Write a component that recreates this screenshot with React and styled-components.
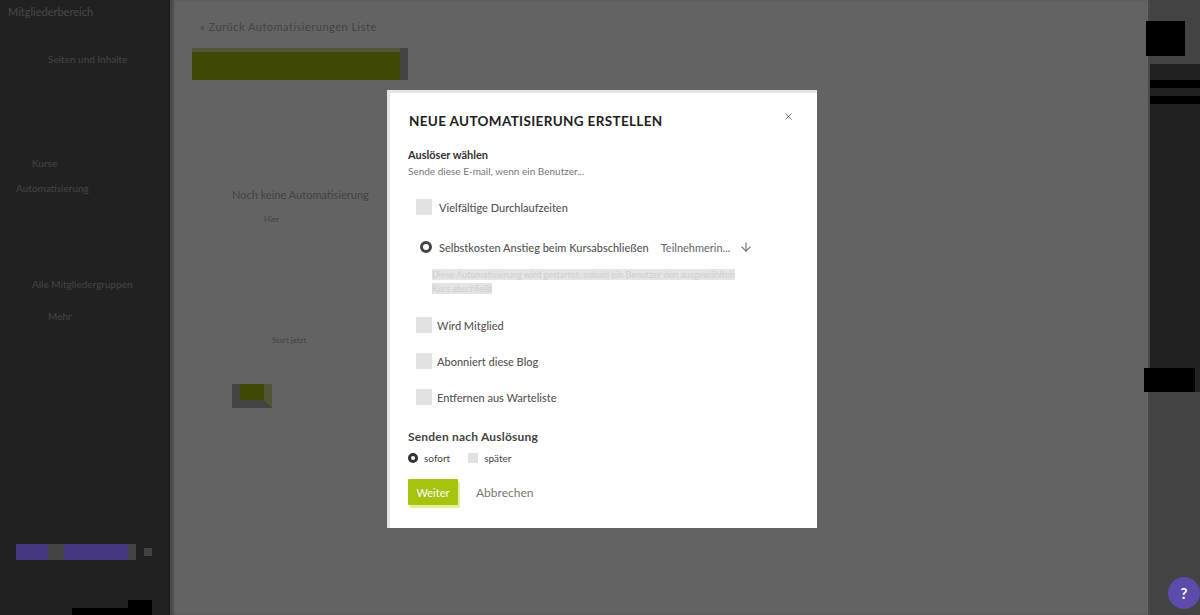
import React from "react";
import styled, { createGlobalStyle } from "styled-components";
import { ArrowDown, X } from "lucide-react";

const triggers = [
  { label: "Vielfältige Durchlaufzeiten", gap: 24 },
  {
    label: "Selbstkosten Anstieg beim Kursabschließen",
    extra: "Teilnehmerin...",
    checked: true,
    hint: "Diese Automatisierung wird gestartet, sobald ein Benutzer den ausgewählten Kurs abschließt",
  },
  { label: "Wird Mitglied", tight: true },
  { label: "Abonniert diese Blog", tight: true },
  { label: "Entfernen aus Warteliste", tight: true },
];

const App = () => {
  return (
    <Page>
      <GlobalStyle />
      <Sidebar>
        <Brand>Mitgliederbereich</Brand>
        <NavItem $indent={48} $top={35}>Seiten und Inhalte</NavItem>
        <NavItem $indent={32} $top={92}>Kurse</NavItem>
        <NavItem $indent={16} $top={13}>Automatisierung</NavItem>
        <NavItem $indent={32} $top={84}>Alle Mitgliedergruppen</NavItem>
        <NavItem $indent={48} $top={20}>Mehr</NavItem>
        <SidebarFoot>
          <UpgradeBar />
          <UpgradeDot />
        </SidebarFoot>
        <BottomStrip />
      </Sidebar>

      <Main>
        <Crumb>« Zurück Automatisierungen Liste</Crumb>
        <TopButton />
        <MainBody>
          <SectionTitle>Noch keine Automatisierung</SectionTitle>
          <SectionText>Hier</SectionText>
          <SectionNote>Start jetzt</SectionNote>
          <SmallButton />
        </MainBody>
      </Main>

      <RightPanel>
        <PanelTop>
          <PanelBlock $width={39} $height={35} $left={-4} />
        </PanelTop>
        <PanelMiddle>
          <PanelBar />
          <PanelBar />
          <PanelBlock $width={51} $height={24} $left={-6} $top={256} />
        </PanelMiddle>
        <PanelBottom>
          <HelpBadge>?</HelpBadge>
        </PanelBottom>
      </RightPanel>

      <Overlay>
        <Modal>
          <ModalHead>
            <ModalTitle>Neue Automatisierung erstellen</ModalTitle>
            <CloseButton aria-label="Schließen">
              <X size={11} strokeWidth={1.6} />
            </CloseButton>
          </ModalHead>

          <FieldLabel>Auslöser wählen</FieldLabel>
          <FieldHelp>Sende diese E-mail, wenn ein Benutzer...</FieldHelp>

          <TriggerList>
            {triggers.map((t) => (
              <Trigger key={t.label}>
                <TriggerRow $tight={t.tight} $gap={t.gap}>
                  <Radio $checked={t.checked} />
                  <TriggerLabel>{t.label}</TriggerLabel>
                  {t.extra && (
                    <>
                      <TriggerExtra>{t.extra}</TriggerExtra>
                      <ArrowIcon>
                        <ArrowDown size={14} strokeWidth={2} />
                      </ArrowIcon>
                    </>
                  )}
                </TriggerRow>
                {t.hint && (
                  <TriggerHint>
                    <HintText>{t.hint}</HintText>
                  </TriggerHint>
                )}
              </Trigger>
            ))}
          </TriggerList>

          <SendLabel>Senden nach Auslösung</SendLabel>
          <SendOptions>
            <SendOption>
              <SmallRadio $checked />
              sofort
            </SendOption>
            <SendOption>
              <SmallRadio />
              später
            </SendOption>
          </SendOptions>

          <Actions>
            <PrimaryButton>Weiter</PrimaryButton>
            <CancelLink>Abbrechen</CancelLink>
          </Actions>
        </Modal>
      </Overlay>
    </Page>
  );
};

export default App;

const GlobalStyle = createGlobalStyle`
  html, body {
    margin: 0;
    padding: 0;
    height: 100%;
    overflow: hidden;
    font-family: "Lato", "Liberation Sans", sans-serif;
  }
  #root {
    height: 100%;
  }
`;

const Page = styled.div`
  position: relative;
  display: flex;
  width: 1200px;
  height: 615px;
  overflow: hidden;
`;

const Sidebar = styled.aside`
  display: flex;
  flex-direction: column;
  width: 170px;
  flex-shrink: 0;
  background: #565656;
  color: #aeaeae;
  font-size: 10px;
  box-shadow: inset -1px 0 0 #444;
`;

const Brand = styled.div`
  margin: 5px 0 0 8px;
  height: 13px;
  font-size: 11px;
  line-height: 13px;
  color: #b8b8b8;
`;

const NavItem = styled.div`
  margin: ${(p) => p.$top}px 0 0 ${(p) => p.$indent}px;
  line-height: 12px;
  white-space: nowrap;
`;

const SidebarFoot = styled.div`
  display: flex;
  align-items: center;
  gap: 8px;
  margin: auto 0 0 16px;
`;

const UpgradeBar = styled.div`
  position: relative;
  z-index: 5;
  width: 120px;
  height: 16px;
  background: linear-gradient(
    to right,
    #45367f 0 32px,
    #444 32px 48px,
    #45367f 48px 112px,
    #444 112px
  );
`;

const UpgradeDot = styled.div`
  width: 8px;
  height: 8px;
  background: #aeaeae;
`;

const BottomStrip = styled.div`
  height: 15px;
  width: 152px;
  margin-top: 40px;
  background: #000;
  clip-path: polygon(128px 0, 152px 0, 152px 15px, 72px 15px, 72px 8px, 128px 8px);
`;

const Main = styled.main`
  flex: 1;
  min-width: 0;
  padding: 21px 0 0 20px;
  background: #fff;
  box-shadow: inset 2px 0 2px #c8c8c8;
  border-left: 2px solid #bbb;
  border-right: 2px solid #bbb;
`;

const Crumb = styled.div`
  margin-left: 8px;
  font-size: 11px;
  line-height: 12px;
  letter-spacing: 0.5px;
  color: #aeaeae;
`;

const TopButton = styled.div`
  width: 208px;
  height: 32px;
  margin-top: 15px;
  background: linear-gradient(to bottom, #d0dc8a 0 4px, #a5b914 4px);
  border-right: 8px solid #aeaeae;
`;

const MainBody = styled.div`
  padding: 108px 0 0 40px;
`;

const SectionTitle = styled.div`
  font-size: 11px;
  line-height: 14px;
  color: #aeaeae;
`;

const SectionText = styled.div`
  margin: 13px 0 0 32px;
  font-size: 8px;
  line-height: 8px;
  color: #aeaeae;
`;

const SectionNote = styled.div`
  margin: 113px 0 0 40px;
  font-size: 8px;
  line-height: 8px;
  color: #aeaeae;
`;

const SmallButton = styled.div`
  width: 24px;
  height: 16px;
  margin-top: 40px;
  background: #a5b914;
  border-bottom: 8px solid #aeaeae;
  border-left: 8px solid #aeaeae;
  border-right: 8px solid #d0dc8a;
`;

const RightPanel = styled.aside`
  display: flex;
  flex-direction: column;
  width: 50px;
  flex-shrink: 0;
`;

const PanelTop = styled.div`
  height: 64px;
  padding-top: 21px;
  box-sizing: border-box;
  background: #aeaeae;
`;

const PanelMiddle = styled.div`
  display: flex;
  flex-direction: column;
  gap: 8px;
  height: 328px;
  padding-top: 16px;
  box-sizing: border-box;
  background: #565656;
`;

const PanelBottom = styled.div`
  flex: 1;
  background: #aeaeae;
`;

const PanelBlock = styled.div`
  width: ${(p) => p.$width}px;
  height: ${(p) => p.$height}px;
  margin: ${(p) => p.$top || 0}px 0 0 ${(p) => p.$left}px;
  background: #000;
`;

const PanelBar = styled.div`
  width: 50px;
  height: 8px;
  background: #000;
`;

const HelpBadge = styled.div`
  position: absolute;
  z-index: 5;
  right: 0;
  bottom: 6px;
  display: flex;
  align-items: center;
  justify-content: center;
  width: 32px;
  height: 32px;
  border-radius: 50%;
  background: #5c4bab;
  color: #fff;
  font-size: 15px;
  font-weight: 700;
`;

const Overlay = styled.div`
  position: absolute;
  inset: 0;
  display: flex;
  justify-content: center;
  align-items: flex-start;
  padding: 90px 0 0 4px;
  box-sizing: border-box;
  background: rgba(0, 0, 0, 0.61);
`;

const Modal = styled.div`
  width: 430px;
  height: 438px;
  padding: 0 22px 0 18px;
  box-sizing: border-box;
  background: #fff;
  color: #333;
  border-top: 3px solid #e4e4e4;
  border-left: 3px solid #e4e4e4;
`;

const ModalHead = styled.div`
  display: flex;
  align-items: center;
  justify-content: space-between;
  padding: 20px 0 0 1px;
`;

const ModalTitle = styled.h2`
  margin: 0;
  font-size: 13.5px;
  line-height: 17px;
  font-weight: 700;
  letter-spacing: 0.35px;
  text-transform: uppercase;
  color: #222;
`;

const CloseButton = styled.button`
  display: flex;
  margin: -10px 1px 0 0;
  padding: 0;
  background: transparent;
  border: none;
  color: #444;
  cursor: pointer;
`;

const FieldLabel = styled.div`
  margin-top: 18px;
  font-size: 11px;
  line-height: 13px;
  font-weight: 700;
  color: #333;
`;

const FieldHelp = styled.div`
  margin-top: 4px;
  font-size: 10px;
  line-height: 12px;
  color: #777;
`;

const TriggerList = styled.div`
  display: flex;
  flex-direction: column;
  margin: 22px 0 0 8px;
`;

const Trigger = styled.div`
  display: flex;
  flex-direction: column;
`;

const TriggerRow = styled.label`
  display: flex;
  align-items: center;
  gap: ${(p) => (p.$tight ? "5px" : "7px")};
  height: 16px;
  margin-bottom: ${(p) => p.$gap || 20}px;
  cursor: pointer;
`;

const Radio = styled.span`
  width: ${(p) => (p.$checked ? "12px" : "16px")};
  height: ${(p) => (p.$checked ? "12px" : "16px")};
  margin-left: ${(p) => (p.$checked ? "4px" : "0")};
  flex-shrink: 0;
  box-sizing: border-box;
  background: ${(p) => (p.$checked ? "#fff" : "#e2e2e2")};
  border: ${(p) => (p.$checked ? "3px solid #444" : "none")};
  border-radius: ${(p) => (p.$checked ? "50%" : "0")};
`;

const TriggerLabel = styled.span`
  font-size: 11px;
  font-weight: 500;
  color: #555;
  white-space: nowrap;
`;

const TriggerExtra = styled.span`
  margin-left: 5px;
  font-size: 11px;
  color: #666;
  white-space: nowrap;
`;

const ArrowIcon = styled.span`
  display: flex;
  margin-left: 2px;
  color: #777;
`;

const TriggerHint = styled.div`
  width: 304px;
  margin: -7px 0 21px 16px;
  font-size: 9px;
  line-height: 14px;
`;

const HintText = styled.span`
  color: #cfcfcf;
  background: #e4e4e4;
`;

const SendLabel = styled.div`
  margin-top: 5px;
  font-size: 12px;
  line-height: 13px;
  letter-spacing: 0.2px;
  font-weight: 700;
  color: #444;
`;

const SendOptions = styled.div`
  display: flex;
  gap: 18px;
  margin-top: 9px;
`;

const SendOption = styled.label`
  display: flex;
  align-items: center;
  gap: 6px;
  font-size: 10px;
  line-height: 12px;
  color: #444;
`;

const SmallRadio = styled.span`
  width: 10px;
  height: 10px;
  box-sizing: border-box;
  background: ${(p) => (p.$checked ? "#fff" : "#e2e2e2")};
  border: ${(p) => (p.$checked ? "3px solid #333" : "none")};
  border-radius: ${(p) => (p.$checked ? "50%" : "0")};
`;

const Actions = styled.div`
  display: flex;
  align-items: center;
  gap: 18px;
  margin-top: 15px;
`;

const PrimaryButton = styled.button`
  width: 50px;
  height: 26px;
  padding: 0;
  background: #a5c30f;
  border: none;
  border-radius: 1px;
  box-shadow: 2px 3px 0 #e6ee9a;
  color: #fff;
  font-family: inherit;
  font-size: 11px;
  cursor: pointer;
`;

const CancelLink = styled.a`
  font-size: 12px;
  color: #777;
  cursor: pointer;
`;
